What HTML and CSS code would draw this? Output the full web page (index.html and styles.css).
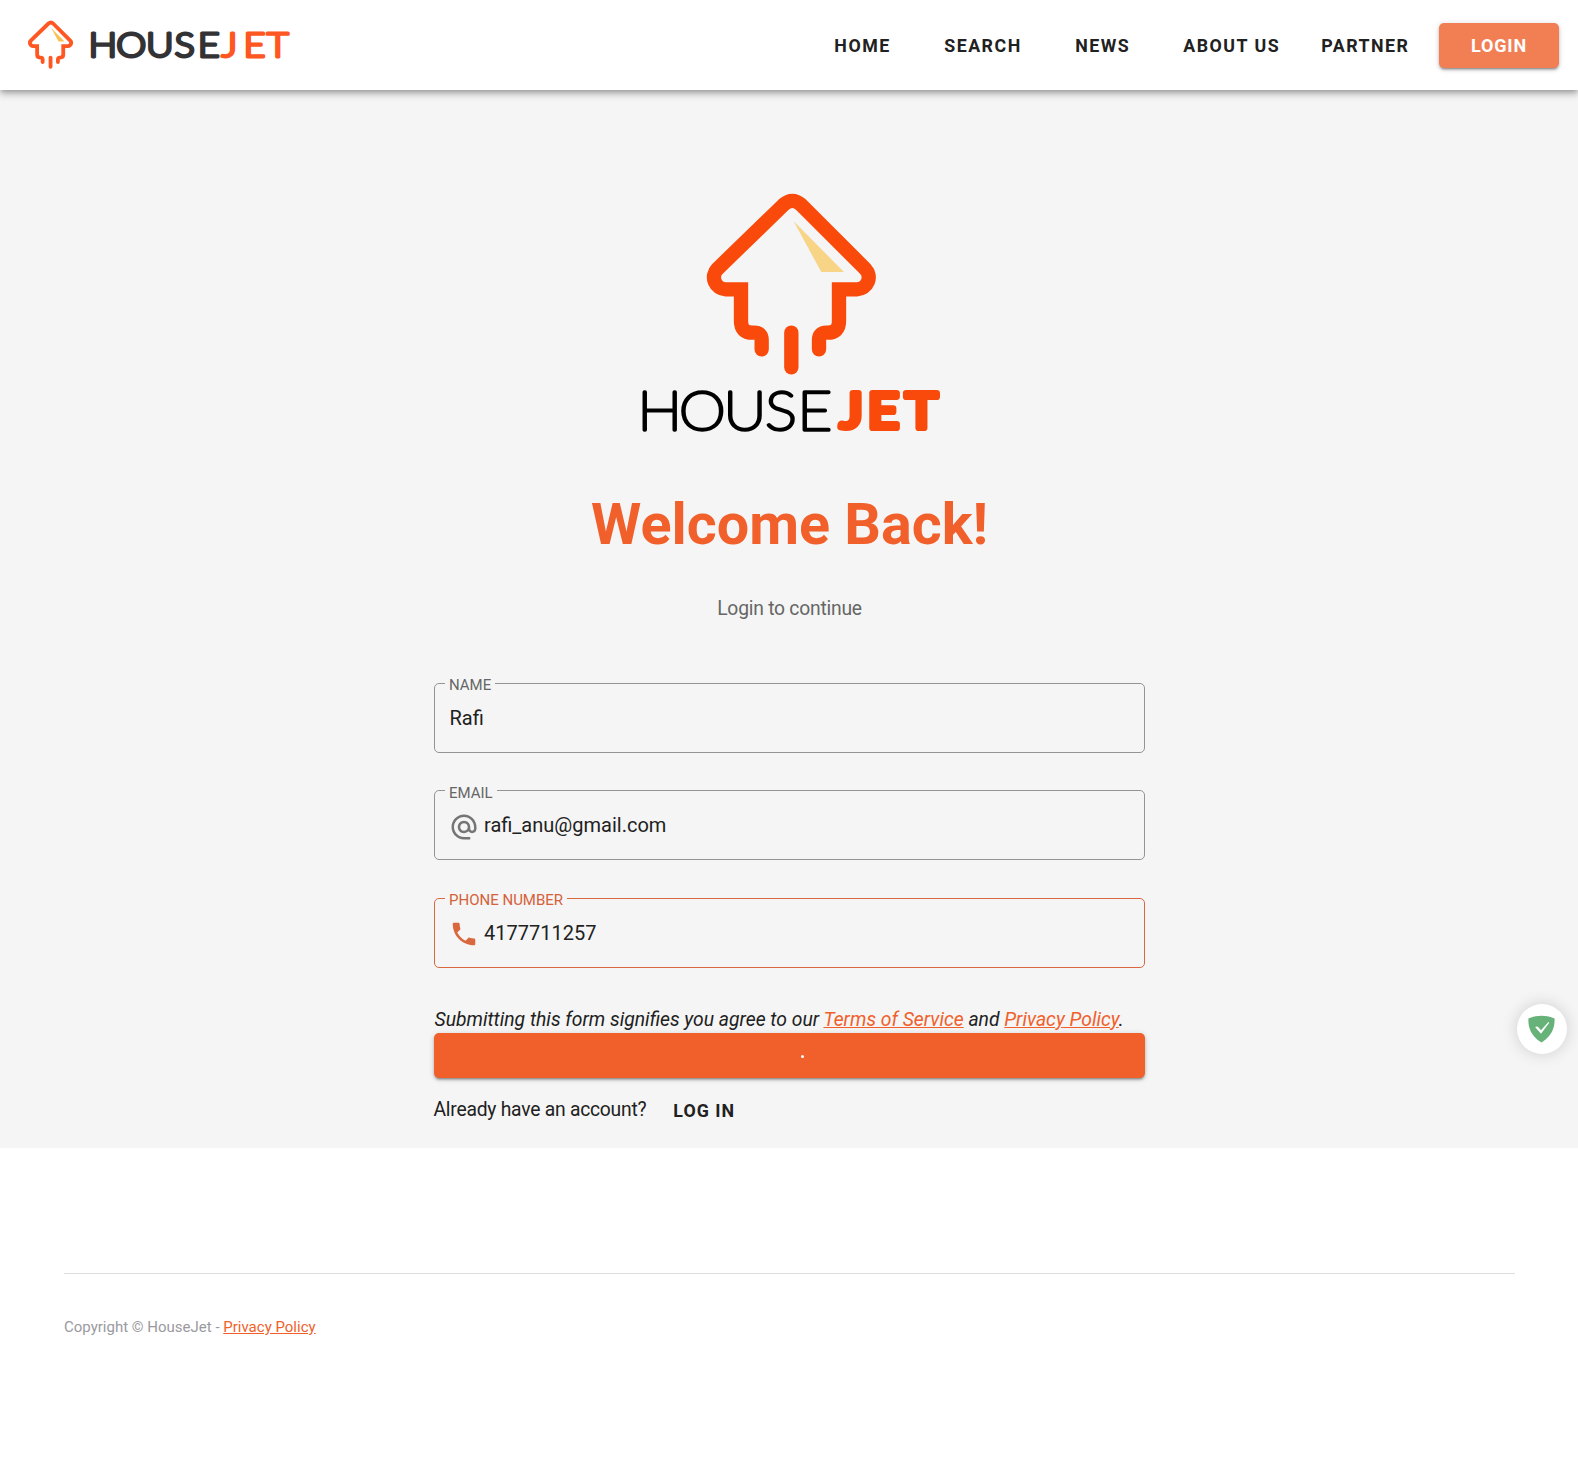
FILE: index.html
```html
<!DOCTYPE html>
<html lang="en">
<head>
<meta charset="utf-8">
<title>HouseJet - Login</title>
<link rel="stylesheet" href="styles.css">
</head>
<body>
<svg class="defs" width="0" height="0" aria-hidden="true">
  <symbol id="rocket" viewBox="250 31 527 563" overflow="visible">
    <g fill="none" stroke="currentColor" stroke-width="43" stroke-linecap="round" stroke-linejoin="miter">
      <path d="M425 508V480Q425 458 403 458H397Q363 458 363 424V328H317A36 36 0 0 1 292 267L491 74Q517 51 543 74L736 267A36 36 0 0 1 711 328H657V424Q657 458 623 458H619Q597 458 597 480V508"/>
      <path d="M514 458V562"/>
    </g>
    <path class="flare" d="M521 124L672 276H604Z"/>
  </symbol>
</svg>
<header class="bar">
  <svg class="brand" width="320" height="90" viewBox="0 0 320 90" role="img">
    <use class="brand-icon" href="#rocket" x="27.1" y="19.7" width="46.8" height="50"/>
    <g transform="scale(1.15 1)">
      <text class="brand-house" y="57.2" x="76.9 101 126.900 151.8 171.9">HOUSE</text>
      <text class="brand-jet" y="57.2" x="192.6 211.8 231.9">JET</text>
    </g>
  </svg>
  <nav class="nav">
    <a class="nav-home">HOME</a>
    <a class="nav-search">SEARCH</a>
    <a class="nav-news">NEWS</a>
    <a class="nav-about">ABOUT US</a>
    <a class="nav-partner">PARTNER</a>
    <a class="btn login">LOGIN</a>
  </nav>
</header>
<main class="page">
  <svg class="logo" width="340" height="270" viewBox="0 0 340 270" role="img">
    <use class="logo-icon" href="#rocket" x="83.33" y="10.33" width="175.67" height="187.67"/>
    <g transform="scale(1.1 1)">
      <text class="logo-house" y="249.8" x="15.9 53.7 94.2 132 161.3">HOUSE</text>
      <text class="logo-jet" y="248" x="200 225.3 259.6">JET</text>
    </g>
  </svg>
  <h1 class="title">Welcome Back!</h1>
  <p class="subtitle">Login to continue</p>
  <form class="form">
    <div class="field"><span class="label">NAME</span><span class="value">Rafi</span></div>
    <div class="field email"><span class="label">EMAIL</span>
      <svg class="icon" viewBox="0 0 24 24"><path d="M12 1.95c-5.52 0-10 4.48-10 10s4.48 10 10 10h5v-2h-5c-4.34 0-8-3.66-8-8s3.66-8 8-8 8 3.66 8 8v1.43c0 .79-.71 1.57-1.5 1.57s-1.5-.78-1.5-1.57v-1.43c0-2.76-2.24-5-5-5s-5 2.24-5 5 2.24 5 5 5c1.38 0 2.64-.56 3.54-1.47.65.89 1.77 1.47 2.96 1.47 1.97 0 3.5-1.6 3.5-3.57v-1.43c0-5.52-4.48-10-10-10zm0 13c-1.66 0-3-1.34-3-3s1.34-3 3-3 3 1.34 3 3-1.34 3-3 3z"/></svg>
      <span class="value">rafi_anu@gmail.com</span></div>
    <div class="field phone"><span class="label">PHONE NUMBER</span>
      <svg class="icon" viewBox="0 0 24 24"><path d="M6.62 10.79c1.44 2.83 3.76 5.14 6.59 6.59l2.2-2.2c.27-.27.67-.36 1.02-.24 1.12.37 2.33.57 3.57.57.55 0 1 .45 1 1V20c0 .55-.45 1-1 1-9.39 0-17-7.61-17-17 0-.55.45-1 1-1h3.5c.55 0 1 .45 1 1 0 1.25.2 2.45.57 3.57.11.35.03.74-.25 1.02l-2.2 2.2z"/></svg>
      <span class="value">4177711257</span></div>
    <p class="terms">Submitting this form signifies you agree to our <a class="link">Terms of Service</a> and <a class="link">Privacy Policy</a>.</p>
    <div class="btn submit"><span class="dot"></span></div>
    <p class="account">Already have an account?<a class="login-link">LOG IN</a></p>
  </form>
</main>
<footer class="footer">Copyright © HouseJet - <a class="link">Privacy Policy</a></footer>
<div class="badge">
  <svg width="27" height="28" viewBox="0 0 27 28"><path fill="#67b279" d="M13.5 .7C9.300 .7 4.200 1.700 .4 3.600C.4 8 0 19 13.500 27.400C27 19 26.600 8 26.600 3.600C22.800 1.700 17.700 .7 13.500 .7Z"/><path fill="#fff" d="M13 18.800L7.200 12.200C8.500 10.900 9.800 11.700 10.600 12.500L13 15.200L19.700 7.700C20.300 7.200 20.900 7.300 21.200 7.700Z"/></svg>
</div>
</body>
</html>
```
FILE: styles.css
```css
body {
  margin: 0;
  height: 1465px;
  background: #fff;
  color: #212121;
  font-family: Roboto, sans-serif;
  overflow: hidden;
}
p, h1 { margin: 0; }
.defs { position: absolute; }
.link { color: #f15f2b; text-decoration: underline; }

.bar {
  position: relative;
  display: flex;
  justify-content: space-between;
  height: 90px;
  background: #fff;
  box-shadow: 0 2px 5px -1px rgba(0,0,0,.25), 0 5px 6px rgba(0,0,0,.14), 0 1px 12px rgba(0,0,0,.12);
}
.brand text { font-family: Lato, sans-serif; font-size: 33px; font-weight: 300; stroke-width: 2.8; stroke-linejoin: round; }
.brand-house { fill: #333336; stroke: #333336; }
.brand-jet { fill: #ff5722; stroke: #ff5722; }
.brand-icon { color: #ff5722; fill: #fbc052; }
.nav {
  display: flex;
  align-items: center;
  padding: 1px 19px 0 0;
  font-size: 17.5px;
  font-weight: 700;
  letter-spacing: 1.5px;
}
.nav-home, .nav-search { margin-right: 53.5px; }
.nav-news { margin-right: 53px; }
.nav-about { margin-right: 41px; }
.nav-partner { margin-right: 29.5px; }
.nav-home, .nav-search, .nav-news, .nav-about, .nav-partner { font-size: 17.8px; }
.btn {
  display: flex;
  align-items: center;
  justify-content: center;
  box-sizing: border-box;
  height: 45px;
  border-radius: 5px;
  background: #f15f2b;
  box-shadow: 0 3px 2px -2px rgba(0,0,0,.25), 0 2px 3px rgba(0,0,0,.2), 0 1px 6px rgba(0,0,0,.14);
}
.login { width: 120px; background: #f27e54; color: #fff; font-size: 18px; letter-spacing: .8px; }

.page {
  display: flex;
  flex-direction: column;
  align-items: center;
  height: 1058px;
  background: #f5f5f5;
}
.logo { margin-top: 90px; margin-right: -2px; }
.logo text { font-family: Lato, sans-serif; stroke-linejoin: round; }
.logo-house { font-size: 54px; font-weight: 100; fill: #000; stroke: #000; stroke-width: 3.4; }
.logo-jet { font-size: 49px; font-weight: 400; fill: #f94a0b; stroke: #f94a0b; stroke-width: 6.200; }
.logo-icon { color: #f94a0b; fill: #f7d486; }
.title { margin: 41px -1px 0 0; font-size: 57.5px; line-height: 68px; color: #f15f2b; }
.subtitle { margin: 36px -1px 0 0; font-size: 19.3px; letter-spacing: -.23px; line-height: 28px; color: #666; }
.form { width: 711px; margin-top: 60px; }
.field {
  position: relative;
  display: flex;
  box-sizing: border-box;
  height: 70px;
  margin-bottom: 37px;
  padding: 17px 15px;
  border: 1px solid #949494;
  border-radius: 5px;
  font-size: 20px;
  line-height: 34px;
}
.email { margin-bottom: 38px; }
.label {
  position: absolute;
  top: -9px;
  left: 10px;
  padding: 0 4px 0 4.500px;
  background: #f5f5f5;
  color: #666;
  font-size: 15px;
  line-height: 20px;
}
.email .label { top: -8px; }
.icon { width: 30px; height: 30px; margin: 3px 5.500px 0 -1px; fill: #757575; }
.email .icon { margin-top: 4px; }
.phone { border-color: #d9683f; }
.phone .label { color: #d4613a; }
.phone .icon { fill: #d9683f; }
.terms { position: relative; top: 1px; padding-left: 1px; font-size: 19.32px; font-style: italic; line-height: 28px; }
.submit { width: 711px; }
.dot { width: 3px; height: 3px; margin: 1px 0 0 26px; border-radius: 50%; background: #fff; }
.account { margin-top: 18px; font-size: 19.3px; letter-spacing: -.24px; line-height: 28px; }
.login-link { position: relative; top: 1px; margin-left: 27px; font-size: 17.8px; font-weight: 700; letter-spacing: 1px; }
.footer {
  margin: 125px 63px 0 64px;
  padding-top: 42px;
  border-top: 1px solid #dedede;
  color: #9a9a9e;
  font-size: 15px;
  line-height: 22px;
}
.badge {
  position: absolute;
  top: 1004px;
  right: 11px;
  display: flex;
  align-items: center;
  justify-content: center;
  width: 50px;
  height: 50px;
  border-radius: 50%;
  background: #fff;
  box-shadow: 0 0 16px rgba(0,0,0,.16);
}
.badge svg { margin: -1px 1px 0 0; }
```
